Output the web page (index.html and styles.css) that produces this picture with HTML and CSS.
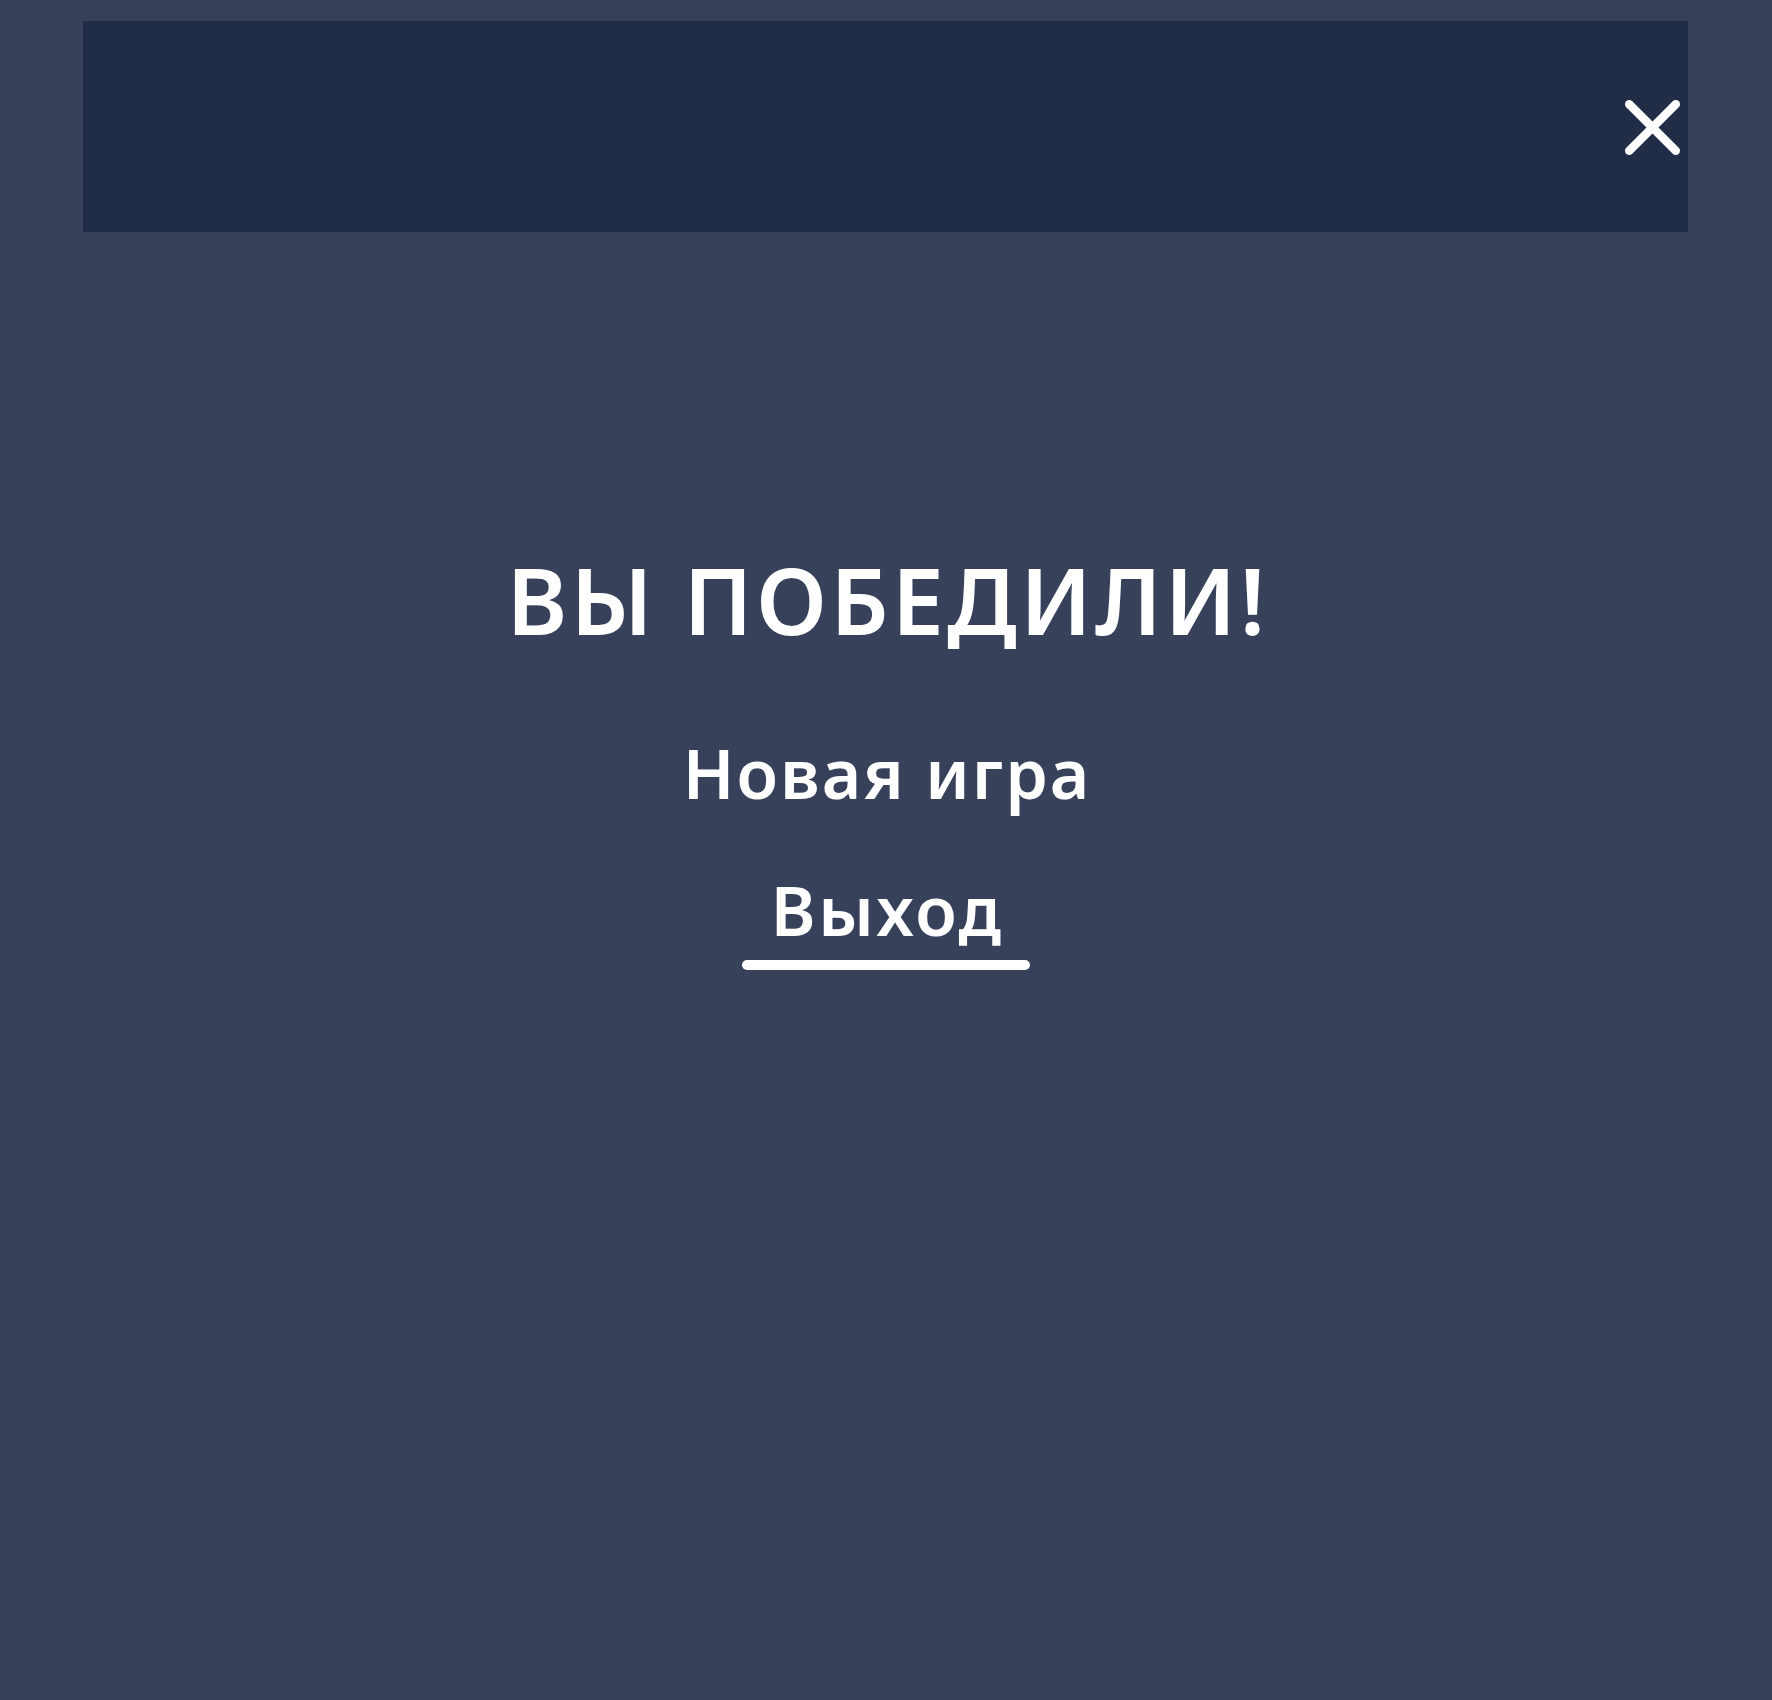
FILE: index.html
```html
<!DOCTYPE html>
<html lang="ru">
<head>
<meta charset="utf-8">
<title>Вы победили!</title>
<link rel="stylesheet" href="styles.css">
</head>
<body>
<header class="topbar">
  <button class="close-btn" aria-label="Закрыть">
    <svg class="close-icon" viewBox="0 0 55 55" width="55" height="55">
      <line x1="4.25" y1="4.25" x2="50.75" y2="50.75"/>
      <line x1="50.75" y1="4.25" x2="4.25" y2="50.75"/>
    </svg>
  </button>
</header>
<main class="result">
  <h1 class="result-title">ВЫ ПОБЕДИЛИ!</h1>
  <button class="menu-item new-game">Новая игра</button>
  <button class="menu-item exit active">Выход</button>
</main>
</body>
</html>
```

FILE: styles.css
```css
html, body {
  margin: 0;
  padding: 0;
}
body {
  background: #37415a;
  min-height: 1700px;
  font-family: "Noto Sans", "DejaVu Sans", sans-serif;
  color: #ffffff;
}
.topbar {
  margin: 21px 84px 0 83px;
  height: 211px;
  background: #212d47;
  display: flex;
  justify-content: flex-end;
  align-items: center;
  padding-right: 8px;
}
.close-btn {
  background: none;
  border: 0;
  padding: 0;
  margin: 2px 0 0 0;
  width: 55px;
  height: 55px;
  cursor: pointer;
  display: block;
}
.close-icon {
  display: block;
  stroke: #ffffff;
  stroke-width: 8.5;
  stroke-linecap: round;
}
.result {
  display: flex;
  flex-direction: column;
  align-items: center;
  padding-top: 322px;
}
.result-title {
  margin: 0;
  font-size: 92px;
  line-height: 92px;
  font-weight: 650;
  letter-spacing: 3.4px;
  padding-left: 3.4px;
}
.menu-item {
  background: none;
  border: 0;
  color: #ffffff;
  font-family: "Noto Sans", "DejaVu Sans", sans-serif;
  font-size: 68px;
  line-height: 68px;
  font-weight: 650;
  letter-spacing: 2px;
  padding: 0 0 0 2px;
  cursor: pointer;
}
.new-game {
  margin-top: 93px;
}
.exit {
  margin-top: 69px;
  letter-spacing: 2.6px;
  padding: 0 26.5px 26px 29.1px;
  position: relative;
}
.exit.active::after {
  content: "";
  position: absolute;
  left: 0;
  right: 0;
  bottom: 0;
  height: 10px;
  border-radius: 5px;
  background: #ffffff;
}
```
